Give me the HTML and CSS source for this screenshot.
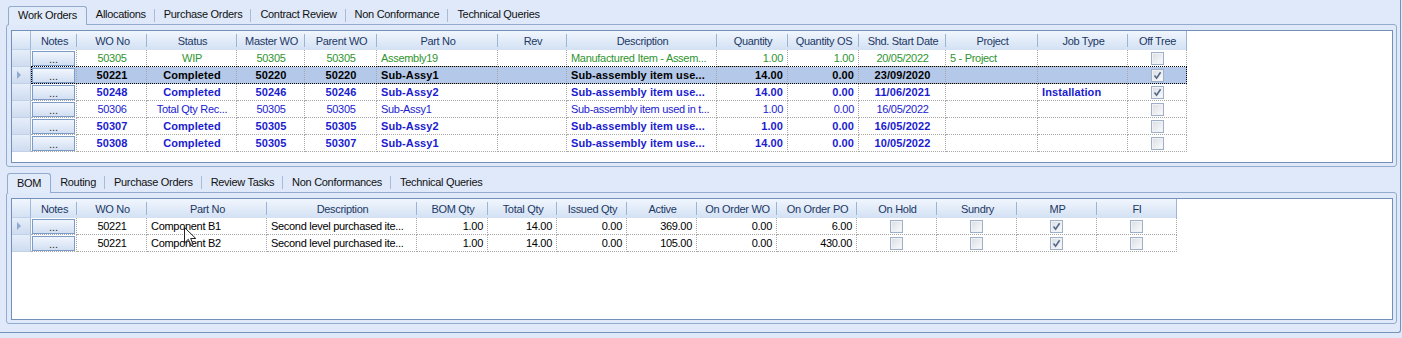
FILE: index.html
```html
<!DOCTYPE html>
<html lang="en">
<head>
    <meta charset="UTF-8">
    <title>Work Orders</title>
    <link rel="stylesheet" href="styles.css">
</head>
<body>
    <div class="frame">
        <div class="tabs">
            <span class="tab active">Work Orders</span>
            <span class="tab sep">Allocations</span>
            <span class="tab sep">Purchase Orders</span>
            <span class="tab sep">Contract Review</span>
            <span class="tab sep">Non Conformance</span>
            <span class="tab">Technical Queries</span>
        </div>
        <div class="panel panel-wo">
            <div class="grid grid-wo">
                <div class="row head">
                    <div class="cell rh"></div>
                    <div class="cell">Notes</div>
                    <div class="cell">WO No</div>
                    <div class="cell">Status</div>
                    <div class="cell">Master WO</div>
                    <div class="cell">Parent WO</div>
                    <div class="cell">Part No</div>
                    <div class="cell">Rev</div>
                    <div class="cell">Description</div>
                    <div class="cell">Quantity</div>
                    <div class="cell">Quantity OS</div>
                    <div class="cell">Shd. Start Date</div>
                    <div class="cell">Project</div>
                    <div class="cell">Job Type</div>
                    <div class="cell">Off Tree</div>
                </div>
                <div class="row green">
                    <div class="cell rh"></div>
                    <div class="cell notes"><span class="btn">...</span></div>
                    <div class="cell c">50305</div>
                    <div class="cell c">WIP</div>
                    <div class="cell c">50305</div>
                    <div class="cell c">50305</div>
                    <div class="cell">Assembly19</div>
                    <div class="cell"></div>
                    <div class="cell">Manufactured Item - Assem...</div>
                    <div class="cell r">1.00</div>
                    <div class="cell r">1.00</div>
                    <div class="cell c">20/05/2022</div>
                    <div class="cell">5 - Project</div>
                    <div class="cell"></div>
                    <div class="cell ck"><span class="chk"></span></div>
                </div>
                <div class="row cur bold">
                    <div class="cell rh"><span class="pointer"></span></div>
                    <div class="cell notes"><span class="btn">...</span></div>
                    <div class="cell c">50221</div>
                    <div class="cell c">Completed</div>
                    <div class="cell c">50220</div>
                    <div class="cell c">50220</div>
                    <div class="cell">Sub-Assy1</div>
                    <div class="cell"></div>
                    <div class="cell">Sub-assembly item use...</div>
                    <div class="cell r">14.00</div>
                    <div class="cell r">0.00</div>
                    <div class="cell c">23/09/2020</div>
                    <div class="cell"></div>
                    <div class="cell"></div>
                    <div class="cell ck"><span class="chk"><svg viewBox="0 0 9 9" width="9" height="9"><path d="M1.5 4.5 L3.6 7.2 L7.6 1.2"/></svg></span></div>
                </div>
                <div class="row blue bold">
                    <div class="cell rh"></div>
                    <div class="cell notes"><span class="btn">...</span></div>
                    <div class="cell c">50248</div>
                    <div class="cell c">Completed</div>
                    <div class="cell c">50246</div>
                    <div class="cell c">50246</div>
                    <div class="cell">Sub-Assy2</div>
                    <div class="cell"></div>
                    <div class="cell">Sub-assembly item use...</div>
                    <div class="cell r">14.00</div>
                    <div class="cell r">0.00</div>
                    <div class="cell c">11/06/2021</div>
                    <div class="cell"></div>
                    <div class="cell">Installation</div>
                    <div class="cell ck"><span class="chk"><svg viewBox="0 0 9 9" width="9" height="9"><path d="M1.5 4.5 L3.6 7.2 L7.6 1.2"/></svg></span></div>
                </div>
                <div class="row blue">
                    <div class="cell rh"></div>
                    <div class="cell notes"><span class="btn">...</span></div>
                    <div class="cell c">50306</div>
                    <div class="cell c">Total Qty Rec...</div>
                    <div class="cell c">50305</div>
                    <div class="cell c">50305</div>
                    <div class="cell">Sub-Assy1</div>
                    <div class="cell"></div>
                    <div class="cell">Sub-assembly item used in t...</div>
                    <div class="cell r">1.00</div>
                    <div class="cell r">0.00</div>
                    <div class="cell c">16/05/2022</div>
                    <div class="cell"></div>
                    <div class="cell"></div>
                    <div class="cell ck"><span class="chk"></span></div>
                </div>
                <div class="row blue bold">
                    <div class="cell rh"></div>
                    <div class="cell notes"><span class="btn">...</span></div>
                    <div class="cell c">50307</div>
                    <div class="cell c">Completed</div>
                    <div class="cell c">50305</div>
                    <div class="cell c">50305</div>
                    <div class="cell">Sub-Assy2</div>
                    <div class="cell"></div>
                    <div class="cell">Sub-assembly item use...</div>
                    <div class="cell r">1.00</div>
                    <div class="cell r">0.00</div>
                    <div class="cell c">16/05/2022</div>
                    <div class="cell"></div>
                    <div class="cell"></div>
                    <div class="cell ck"><span class="chk"></span></div>
                </div>
                <div class="row blue bold">
                    <div class="cell rh"></div>
                    <div class="cell notes"><span class="btn">...</span></div>
                    <div class="cell c">50308</div>
                    <div class="cell c">Completed</div>
                    <div class="cell c">50305</div>
                    <div class="cell c">50307</div>
                    <div class="cell">Sub-Assy1</div>
                    <div class="cell"></div>
                    <div class="cell">Sub-assembly item use...</div>
                    <div class="cell r">14.00</div>
                    <div class="cell r">0.00</div>
                    <div class="cell c">10/05/2022</div>
                    <div class="cell"></div>
                    <div class="cell"></div>
                    <div class="cell ck"><span class="chk"></span></div>
                </div>
            </div>
        </div>

        <div class="tabs tabs-bom">
            <span class="tab active">BOM</span>
            <span class="tab sep">Routing</span>
            <span class="tab sep">Purchase Orders</span>
            <span class="tab sep">Review Tasks</span>
            <span class="tab sep">Non Conformances</span>
            <span class="tab">Technical Queries</span>
        </div>
        <div class="panel panel-bom">
            <div class="grid grid-bom">
                <div class="row head">
                    <div class="cell rh"></div>
                    <div class="cell">Notes</div>
                    <div class="cell">WO No</div>
                    <div class="cell">Part No</div>
                    <div class="cell">Description</div>
                    <div class="cell">BOM Qty</div>
                    <div class="cell">Total Qty</div>
                    <div class="cell">Issued Qty</div>
                    <div class="cell">Active</div>
                    <div class="cell">On Order WO</div>
                    <div class="cell">On Order PO</div>
                    <div class="cell">On Hold</div>
                    <div class="cell">Sundry</div>
                    <div class="cell">MP</div>
                    <div class="cell">FI</div>
                </div>
                <div class="row">
                    <div class="cell rh"><span class="pointer"></span></div>
                    <div class="cell notes"><span class="btn">...</span></div>
                    <div class="cell c">50221</div>
                    <div class="cell">Component B1</div>
                    <div class="cell">Second level purchased ite...</div>
                    <div class="cell r">1.00</div>
                    <div class="cell r">14.00</div>
                    <div class="cell r">0.00</div>
                    <div class="cell r">369.00</div>
                    <div class="cell r">0.00</div>
                    <div class="cell r">6.00</div>
                    <div class="cell ck"><span class="chk"></span></div>
                    <div class="cell ck"><span class="chk"></span></div>
                    <div class="cell ck"><span class="chk"><svg viewBox="0 0 9 9" width="9" height="9"><path d="M1.5 4.5 L3.6 7.2 L7.6 1.2"/></svg></span></div>
                    <div class="cell ck"><span class="chk"></span></div>
                </div>
                <div class="row">
                    <div class="cell rh"></div>
                    <div class="cell notes"><span class="btn">...</span></div>
                    <div class="cell c">50221</div>
                    <div class="cell">Component B2</div>
                    <div class="cell">Second level purchased ite...</div>
                    <div class="cell r">1.00</div>
                    <div class="cell r">14.00</div>
                    <div class="cell r">0.00</div>
                    <div class="cell r">105.00</div>
                    <div class="cell r">0.00</div>
                    <div class="cell r">430.00</div>
                    <div class="cell ck"><span class="chk"></span></div>
                    <div class="cell ck"><span class="chk"></span></div>
                    <div class="cell ck"><span class="chk"><svg viewBox="0 0 9 9" width="9" height="9"><path d="M1.5 4.5 L3.6 7.2 L7.6 1.2"/></svg></span></div>
                    <div class="cell ck"><span class="chk"></span></div>
                </div>
            </div>
        </div>

        <svg class="cursor" width="13" height="20" viewBox="0 0 13 20">
            <path d="M0.5 0.5 L0.5 16 L4.3 12.3 L7 18.6 L9.3 17.6 L6.7 11.5 L11.8 11.5 Z"/>
        </svg>
    </div>
</body>
</html>
```

FILE: styles.css
```css
* {
    box-sizing: border-box;
}

body {
    margin: 0;
    background-color: #dfe9f9;
    font-family: "Liberation Sans", Arial, sans-serif;
    font-size: 11px;
    letter-spacing: -0.3px;
    color: #000;
}

.frame {
    position: relative;
    width: 1401px;
    height: 333px;
    padding: 6px 3px 0 6px;
    border-right: 1px solid #7592b9;
    border-bottom: 1px solid #7592b9;
    border-bottom-right-radius: 3px;
}

/* tab strips */
.tabs {
    display: flex;
    align-items: flex-start;
    height: 18px;
    padding-left: 2px;
}

.tabs-bom {
    margin-top: 6px;
    height: 19px;
    padding-left: 1px;
}

.tab {
    height: 18px;
    padding: 0 9px;
    line-height: 17px;
    white-space: nowrap;
    color: #111;
}

.tab.sep {
    background: linear-gradient(#a9bcd7, #a9bcd7) 100% 3px / 1px 13px no-repeat;
}

.tab.active {
    position: relative;
    z-index: 1;
    height: 19px;
    line-height: 17px;
    border: 1px solid #93abcd;
    border-bottom: none;
    border-radius: 3px 3px 0 0;
    background-color: #e2ebfa;
}

.tabs-bom .tab {
    height: 19px;
    line-height: 19px;
}

.tabs-bom .tab.active {
    height: 20px;
}

/* tab pages */
.panel {
    height: 143px;
    padding: 5px 3px 3px 4px;
    border: 1px solid #93abcd;
    border-radius: 3px;
}

.panel-bom {
    height: 132px;
}

.grid {
    height: 100%;
    border: 1px solid #7390b8;
    background-color: #fff;
    overflow: hidden;
}

/* rows */
.row {
    display: grid;
    width: max-content;
    height: 17px;
}

.grid-wo .row {
    grid-template-columns: 19px 46px 70px 90px 68px 72px 121px 69px 150px 71px 71px 87px 92px 90px 59px;
}

.grid-bom .row {
    grid-template-columns: 19px 46px 70px 120px 150px 71px 69px 70px 70px 80px 80px 80px 80px 80px 80px;
}

.cell {
    padding: 0 3px 0 4px;
    line-height: 17px;
    white-space: nowrap;
    overflow: hidden;
    border-right: 1px dotted #a8a8a8;
    border-bottom: 1px dotted #a8a8a8;
}

.c {
    text-align: center;
}

.r {
    text-align: right;
    padding-right: 4px;
}

.row.head {
    height: 19px;
    background: linear-gradient(#f1f6fd, #d3e1f4);
}

.head .cell {
    border: none;
    padding-top: 1px;
    line-height: 19px;
    text-align: center;
    color: #1c3865;
    background: linear-gradient(#9cb4d6, #9cb4d6) 100% 3px / 1px 13px no-repeat;
}

.head .cell:last-child {
    border-right: 1px solid #9cb4d6;
    background: none;
}

.cell.rh {
    display: flex;
    align-items: center;
    padding: 0 0 0 5px;
    border-right: 1px solid #a3b9d9;
    border-bottom: 1px solid #c0d1ea;
    background: linear-gradient(#e6eef9, #cfdcf0);
}

.head .cell.rh {
    border-right: 1px solid #a3b9d9;
    background: none;
}

.pointer {
    width: 0;
    height: 0;
    border-left: 4px solid #8fa9cf;
    border-top: 4px solid transparent;
    border-bottom: 4px solid transparent;
}

.cell.notes {
    display: flex;
    align-items: center;
    padding: 0 1px;
}

.btn {
    width: 100%;
    height: 15px;
    border: 1px solid #7c9bc5;
    background: linear-gradient(#f1f6fd, #d2dff2);
    text-align: center;
    line-height: 14px;
    color: #333;
    font-weight: normal;
    letter-spacing: 0;
}

.cell.ck {
    display: flex;
    align-items: center;
    justify-content: center;
    padding: 0;
}

.chk {
    display: flex;
    align-items: center;
    justify-content: center;
    width: 13px;
    height: 13px;
    border: 1px solid #a0b0c7;
    background: linear-gradient(135deg, #d9dde3, #fbfcfd);
    box-shadow: inset 0 0 0 1px #f0f2f6;
}

.chk path {
    fill: none;
    stroke: #54688a;
    stroke-width: 1.6;
}

/* row colours */
.green {
    color: #2f952f;
}

.blue {
    color: #1b1bd0;
}

.bold {
    font-weight: bold;
    letter-spacing: 0.1px;
}

.row.cur {
    position: relative;
}

.row.cur .cell:not(.rh) {
    background-color: #b4c8e9;
}

.row.cur::after {
    content: "";
    position: absolute;
    left: 19px;
    right: 0;
    top: -1px;
    bottom: 0;
    border: 1px dotted #000;
    pointer-events: none;
}

.cursor {
    position: absolute;
    left: 184px;
    top: 227px;
}

.cursor path {
    fill: rgba(255, 255, 255, 0.6);
    stroke: #222;
    stroke-width: 1;
}
```
